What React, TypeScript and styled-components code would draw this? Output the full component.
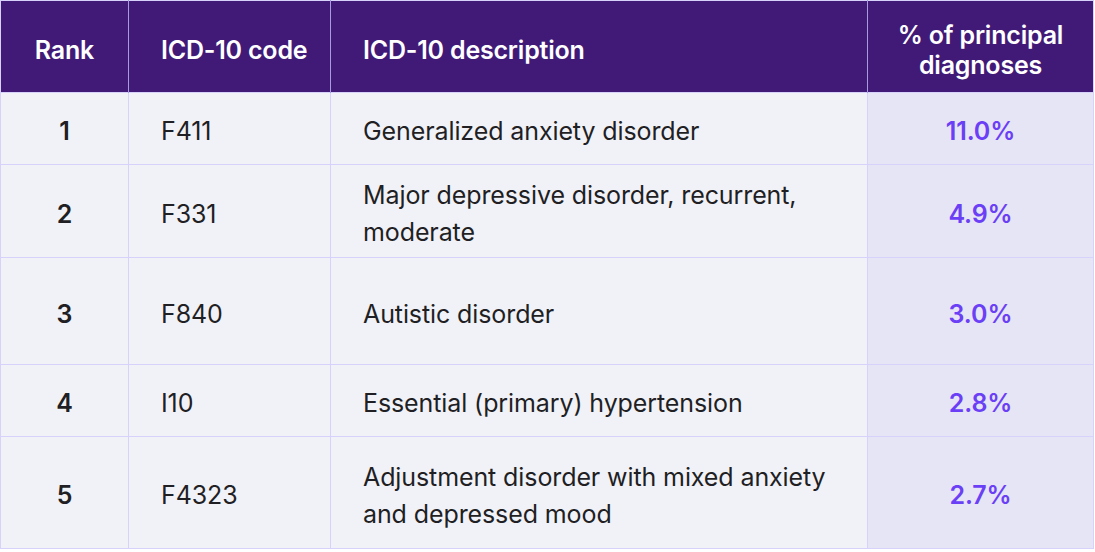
import React from "react";
import styled, { createGlobalStyle } from "styled-components";

const Global = createGlobalStyle`
  html, body { margin: 0; padding: 0; background: #ffffff; }
  body { font-family: Inter, "Noto Sans", sans-serif; }
`;

const Table = styled.table`
  width: 1093px;
  border-collapse: collapse;
  table-layout: fixed;
  font-family: Inter, "Noto Sans", sans-serif;
  font-size: 25px;
  border: 1px solid #d6d2fb;
`;

const HeadRow = styled.tr`
  height: 92px;
  background: #411a78;
`;

const Th = styled.th<{ $align?: "left" | "center" }>`
  color: #ffffff;
  font-weight: 600;
  font-size: 25px;
  line-height: 30px;
  letter-spacing: -0.2px;
  white-space: nowrap;
  text-align: ${(p) => p.$align ?? "left"};
  padding: 6px ${(p) => (p.$align === "center" ? "0" : "20px")} 0 ${(p) => (p.$align === "center" ? "0" : "32px")};
  border-right: 1px solid #a79be0;
  &:last-child { border-right: none; }
`;

const Tr = styled.tr<{ $h: number }>`
  height: ${(p) => p.$h}px;
  background: #f1f2f8;
  border-top: 1px solid #d6d2fb;
`;

const Td = styled.td<{ $align?: "left" | "center"; $bold?: boolean; $accent?: boolean }>`
  color: ${(p) => (p.$accent ? "#6a3ff6" : "#1f1f24")};
  font-weight: ${(p) => (p.$bold || p.$accent ? 600 : 400)};
  background: ${(p) => (p.$accent ? "#e6e5f5" : "transparent")};
  text-align: ${(p) => p.$align ?? "left"};
  padding: 6px ${(p) => (p.$align === "center" ? "0" : "32px")} 0;
  line-height: 37px;
  letter-spacing: -0.1px;
  border-right: 1px solid #d6d2fb;
  vertical-align: middle;
`;

const rows = [
  { rank: 1, code: "F411", desc: "Generalized anxiety disorder", pct: "11.0%", h: 72 },
  { rank: 2, code: "F331", desc: "Major depressive disorder, recurrent, moderate", pct: "4.9%", h: 93 },
  { rank: 3, code: "F840", desc: "Autistic disorder", pct: "3.0%", h: 107 },
  { rank: 4, code: "I10", desc: "Essential (primary) hypertension", pct: "2.8%", h: 72 },
  { rank: 5, code: "F4323", desc: "Adjustment disorder with mixed anxiety and depressed mood", pct: "2.7%", h: 112 },
];

export default function App() {
  return (
    <>
      <Global />
      <Table>
        <colgroup>
          <col style={{ width: 128 }} />
          <col style={{ width: 202 }} />
          <col style={{ width: 537 }} />
          <col style={{ width: 226 }} />
        </colgroup>
        <thead>
          <HeadRow>
            <Th $align="center">Rank</Th>
            <Th>ICD-10 code</Th>
            <Th>ICD-10 description</Th>
            <Th $align="center">% of principal<br />diagnoses</Th>
          </HeadRow>
        </thead>
        <tbody>
          {rows.map((r) => (
            <Tr key={r.rank} $h={r.h}>
              <Td $align="center" $bold>{r.rank}</Td>
              <Td>{r.code}</Td>
              <Td>{r.desc}</Td>
              <Td $align="center" $accent>{r.pct}</Td>
            </Tr>
          ))}
        </tbody>
      </Table>
    </>
  );
}
